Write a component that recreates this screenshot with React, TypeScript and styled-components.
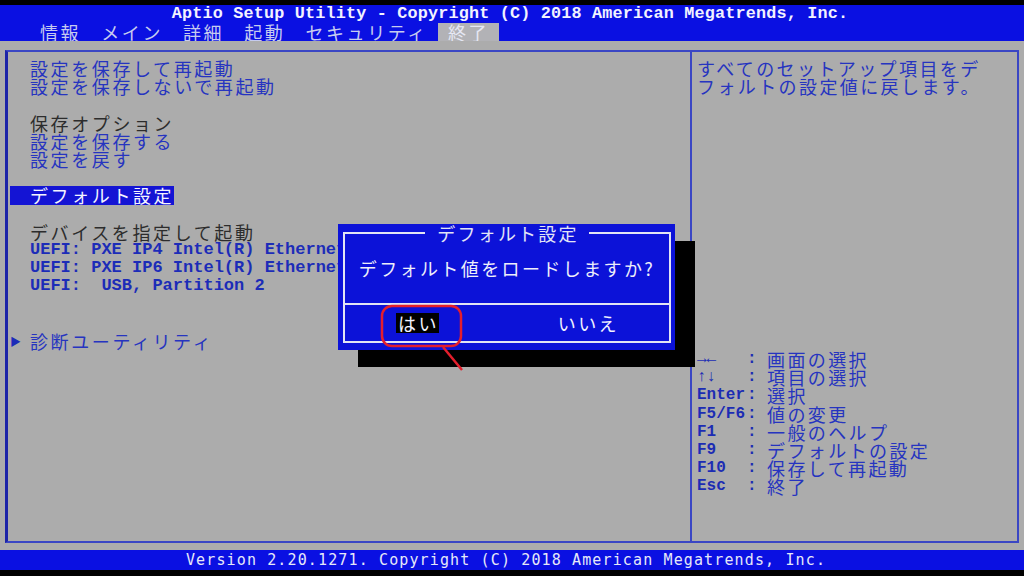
import React from 'react';
import styled, { createGlobalStyle } from 'styled-components';

const JP = '"Noto Sans CJK JP", "Noto Sans", sans-serif';
const MONO = '"Liberation Mono", "DejaVu Sans Mono", monospace';
const BIOS_BLUE = '#0a10e2';
const PANEL_GRAY = '#acacac';
const LINE_BLUE = '#3a46c4';
const TEXT_BLUE = '#2634c0';

const GlobalStyle = createGlobalStyle`
  html, body { margin: 0; padding: 0; background: #000; }
  * { box-sizing: border-box; }
`;

const Screen = styled.div`
  position: relative;
  width: 1024px;
  height: 576px;
  overflow: hidden;
  display: flex;
  flex-direction: column;
  background: #000;
  padding: 5px 0 6px;
`;

const Header = styled.header`
  height: 36px;
  flex: none;
  background: ${BIOS_BLUE};
  display: flex;
  flex-direction: column;
`;

const Title = styled.div`
  height: 18px;
  line-height: 18px;
  text-align: center;
  font-family: ${MONO};
  font-weight: bold;
  font-size: 16.8px;
  letter-spacing: 0.18px;
  padding-right: 4px;
  color: #f2f2ff;
  white-space: pre;
`;

const Tabs = styled.nav`
  display: flex;
  height: 18px;
  padding-left: 30px;
`;

const Tab = styled.span<{ $active?: boolean }>`
  padding: 0 10px;
  line-height: 18px;
  font-family: ${JP};
  font-size: 18px;
  letter-spacing: 2.6px;
  color: ${p => (p.$active ? '#e6e8f4' : '#c6cbef')};
  background: ${p => (p.$active ? '#b2b2b6' : 'transparent')};
`;

const Body = styled.main`
  flex: 1;
  background: ${PANEL_GRAY};
  padding: 9px 5px 7px 5px;
`;

const Frame = styled.div`
  height: 100%;
  display: grid;
  grid-template-columns: 682px 1fr;
  border: 2px solid ${LINE_BLUE};
  border-left: 3px solid #1c24a8;
`;

const LeftPanel = styled.section`
  overflow: hidden;
  padding: 7px 0 0 2px;
`;

const Item = styled.div<{ $selected?: boolean; $kind?: 'link' | 'label' | 'mono' }>`
  display: flex;
  width: fit-content;
  height: 18.2px;
  line-height: 18.2px;
  white-space: pre;
  font-family: ${p => (p.$kind === 'mono' ? MONO : JP)};
  font-weight: ${p => (p.$kind === 'mono' ? 'bold' : 'normal')};
  font-size: ${p => (p.$kind === 'mono' ? '17px' : '18px')};
  letter-spacing: ${p => (p.$kind === 'mono' ? '0' : '2.6px')};
  color: ${p =>
    p.$selected ? '#f4f4ff' : p.$kind === 'label' ? '#2c2c2c' : p.$kind === 'mono' ? '#1c2cb8' : TEXT_BLUE};
  background: ${p => (p.$selected ? '#1414d4' : 'transparent')};
`;

const Marker = styled.span`
  width: 20px;
  flex: none;
  font-size: 11px;
  letter-spacing: 0;
  color: #1c2cb8;
`;

const Blank = styled.div`
  height: 18.2px;
`;

const RightPanel = styled.aside`
  border-left: 2px solid ${LINE_BLUE};
  padding: 7px 0 0 5px;
`;

const HelpText = styled.div`
  font-family: ${JP};
  font-size: 18px;
  line-height: 18.2px;
  letter-spacing: 2.4px;
  color: ${TEXT_BLUE};
`;

const KeyList = styled.div`
  margin-top: 254.6px;
  display: grid;
  grid-template-columns: 48px 22px auto;
  grid-auto-rows: 18.2px;
  align-items: center;
`;

const Key = styled.span`
  font-family: ${MONO};
  font-weight: bold;
  font-size: 16px;
  color: #1c2cb4;
  white-space: pre;
`;

const Colon = styled(Key)`
  padding-left: 2px;
`;

const KeyDesc = styled.span`
  font-family: ${JP};
  font-size: 18px;
  letter-spacing: 2.4px;
  color: ${TEXT_BLUE};
  line-height: 18.2px;
`;

const Footer = styled.footer`
  height: 20px;
  flex: none;
  background: ${BIOS_BLUE};
  text-align: center;
  line-height: 20px;
  padding-right: 12px;
  font-family: "DejaVu Sans Mono", monospace;
  font-size: 15px;
  letter-spacing: 1.13px;
  color: #e6e8f8;
  white-space: pre;
`;

const Dialog = styled.div`
  position: absolute;
  left: 338px;
  top: 224px;
  width: 337px;
  height: 126px;
  background: #0c12d8;
  box-shadow: 20px 17px 0 #000;
  padding: 0 4px 7px 5px;
`;

const DialogBox = styled.fieldset`
  margin: 0;
  padding: 0;
  min-width: 0;
  height: 100%;
  border: 2px solid #e2e4f4;
`;

const DialogTitle = styled.legend`
  margin: 0 auto;
  padding: 0 10px 0 12px;
  line-height: 18px;
  font-family: ${JP};
  font-size: 18px;
  letter-spacing: 2.2px;
  color: #e2e4f6;
`;

const Question = styled.div`
  height: 63px;
  padding-top: 17px;
  line-height: 18px;
  text-align: center;
  font-family: ${JP};
  font-size: 18px;
  letter-spacing: 2.4px;
  color: #eeeefa;
  border-bottom: 2px solid #e2e4f4;
`;

const ButtonRow = styled.div`
  height: 35px;
  display: flex;
  align-items: center;
  gap: 117px;
  padding-left: 51px;
`;

const DialogButton = styled.span<{ $focused?: boolean }>`
  line-height: 20px;
  font-family: ${JP};
  font-size: 18px;
  letter-spacing: 2.4px;
  padding-left: 2px;
  color: #f2f2ff;
  background: ${p => (p.$focused ? '#000' : 'transparent')};
`;

const Annotation = styled.svg`
  position: absolute;
  left: 378px;
  top: 302px;
  overflow: visible;
`;

const menu: { text?: string; kind?: 'link' | 'label' | 'mono'; selected?: boolean; submenu?: boolean }[] = [
  { text: '設定を保存して再起動' },
  { text: '設定を保存しないで再起動' },
  {},
  { text: '保存オプション', kind: 'label' },
  { text: '設定を保存する' },
  { text: '設定を戻す' },
  {},
  { text: 'デフォルト設定', selected: true },
  {},
  { text: 'デバイスを指定して起動', kind: 'label' },
  { text: 'UEFI: PXE IP4 Intel(R) Ethernet Connection (7) I219-V', kind: 'mono' },
  { text: 'UEFI: PXE IP6 Intel(R) Ethernet Connection (7) I219-V', kind: 'mono' },
  { text: 'UEFI:  USB, Partition 2', kind: 'mono' },
  {},
  {},
  { text: '診断ユーティリティ', submenu: true },
];

const keys = [
  ['→←', '画面の選択'],
  ['↑↓', '項目の選択'],
  ['Enter', '選択'],
  ['F5/F6', '値の変更'],
  ['F1', '一般のヘルプ'],
  ['F9', 'デフォルトの設定'],
  ['F10', '保存して再起動'],
  ['Esc', '終了'],
];

const tabs = ['情報', 'メイン', '詳細', '起動', 'セキュリティ', '終了'];

export default function App() {
  return (
    <>
      <GlobalStyle />
      <Screen>
        <Header>
          <Title>Aptio Setup Utility - Copyright (C) 2018 American Megatrends, Inc.</Title>
          <Tabs>
            {tabs.map(t => (
              <Tab key={t} $active={t === '終了'}>
                {t}
              </Tab>
            ))}
          </Tabs>
        </Header>
        <Body>
          <Frame>
            <LeftPanel>
              {menu.map((m, i) =>
                m.text ? (
                  <Item key={i} $kind={m.kind || 'link'} $selected={m.selected}>
                    <Marker>{m.submenu ? '▶' : ''}</Marker>
                    <span>{m.text}</span>
                  </Item>
                ) : (
                  <Blank key={i} />
                ),
              )}
            </LeftPanel>
            <RightPanel>
              <HelpText>
                すべてのセットアップ項目をデ
                <br />
                フォルトの設定値に戻します。
              </HelpText>
              <KeyList>
                {keys.map(([k, d]) => (
                  <React.Fragment key={k}>
                    <Key>{k}</Key>
                    <Colon>:</Colon>
                    <KeyDesc>{d}</KeyDesc>
                  </React.Fragment>
                ))}
              </KeyList>
            </RightPanel>
          </Frame>
        </Body>
        <Footer>Version 2.20.1271. Copyright (C) 2018 American Megatrends, Inc.</Footer>

        <Dialog>
          <DialogBox>
            <DialogTitle>デフォルト設定</DialogTitle>
            <Question>デフォルト値をロードしますか?</Question>
            <ButtonRow>
              <DialogButton $focused>はい</DialogButton>
              <DialogButton>いいえ</DialogButton>
            </ButtonRow>
          </DialogBox>
        </Dialog>

        <Annotation width="90" height="72" viewBox="0 0 90 72">
          <rect x="4" y="4" width="79" height="40" rx="10" fill="none" stroke="#e41e2c" strokeWidth="2.5" />
          <line x1="65" y1="45" x2="84" y2="68" stroke="#e41e2c" strokeWidth="2.5" />
        </Annotation>
      </Screen>
    </>
  );
}
